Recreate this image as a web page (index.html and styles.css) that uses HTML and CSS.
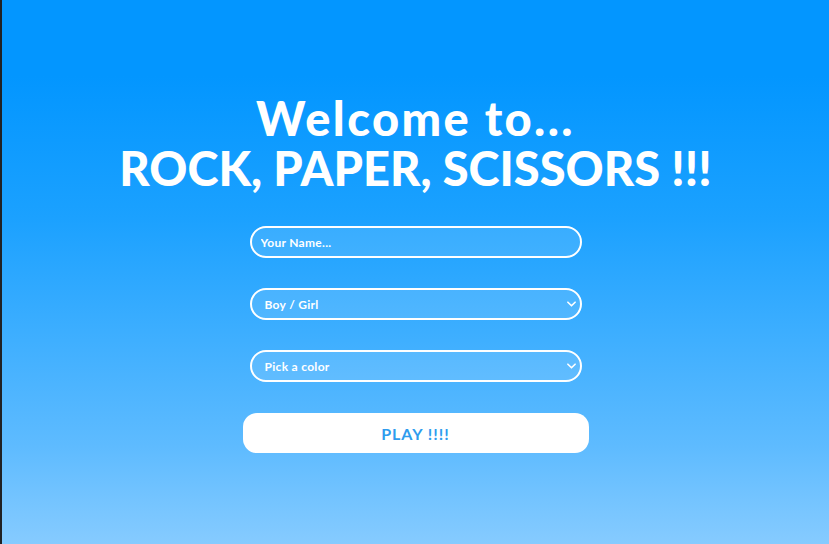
FILE: index.html
```html
<!DOCTYPE html>
<html lang="en">
<head>
<meta charset="utf-8">
<title>Rock, Paper, Scissors</title>
<link rel="stylesheet" href="styles.css">
</head>
<body>
<div class="frame">
  <main class="page">
    <h1 class="title"><span class="title-lead">Welcome to...</span><br>ROCK, PAPER, SCISSORS !!!</h1>
    <form class="form">
      <input class="field" type="text" placeholder="Your Name...">
      <div class="select-wrap">
        <select class="field select">
          <option>Boy / Girl</option>
        </select>
        <svg class="chev" viewBox="0 0 10 6" width="9" height="6"><path d="M1 1l4 4 4-4" fill="none" stroke="#fff" stroke-width="1.8" stroke-linecap="round" stroke-linejoin="round"/></svg>
      </div>
      <div class="select-wrap">
        <select class="field select">
          <option>Pick a color</option>
        </select>
        <svg class="chev" viewBox="0 0 10 6" width="9" height="6"><path d="M1 1l4 4 4-4" fill="none" stroke="#fff" stroke-width="1.8" stroke-linecap="round" stroke-linejoin="round"/></svg>
      </div>
      <button class="play" type="button">PLAY !!!!</button>
    </form>
  </main>
</div>
</body>
</html>
```
FILE: styles.css
```css
html, body {
  margin: 0;
  height: 100%;
}
body {
  background: #202124;
  font-family: "Lato", "Liberation Sans", Arial, sans-serif;
}
.frame {
  margin-left: 2px;
  height: 100%;
  background: linear-gradient(to bottom, #0396ff 0%, #0396ff 14%, #1ba1ff 40%, #5ebbff 82%, #86cbff 100%);
}
.page {
  display: flex;
  flex-direction: column;
  align-items: center;
  padding-top: 93px;
}
.title {
  margin: 0;
  color: #fff;
  font-family: "Lato", "Liberation Sans", Arial, sans-serif;
  font-weight: 900;
  font-size: 47px;
  line-height: 50px;
  text-align: center;
}
.title-lead {
  letter-spacing: 2.4px;
}
.form {
  display: flex;
  flex-direction: column;
  align-items: center;
  gap: 30px;
  margin-top: 33px;
}
.field {
  box-sizing: border-box;
  width: 332px;
  height: 32px;
  border: 2px solid #fff;
  border-radius: 16px;
  background: rgba(255, 255, 255, 0.12);
  color: #fff;
  font-family: "Lato", "Liberation Sans", Arial, sans-serif;
  font-weight: 700;
  font-size: 12px;
  letter-spacing: 0.3px;
  padding: 0 9px;
  outline: none;
  display: block;
}
.field::placeholder {
  color: #fff;
  opacity: 1;
}
.select-wrap {
  position: relative;
}
.select {
  appearance: none;
  -webkit-appearance: none;
  padding-left: 13px;
}
.chev {
  position: absolute;
  right: 6px;
  top: 13px;
  pointer-events: none;
}
.play {
  box-sizing: border-box;
  width: 346px;
  height: 40px;
  margin-top: 1px;
  border: none;
  border-radius: 14px;
  background: #fff;
  color: #2e9cee;
  font-family: "Lato", "Liberation Sans", Arial, sans-serif;
  font-weight: 700;
  font-size: 16px;
  letter-spacing: 1px;
}
```
